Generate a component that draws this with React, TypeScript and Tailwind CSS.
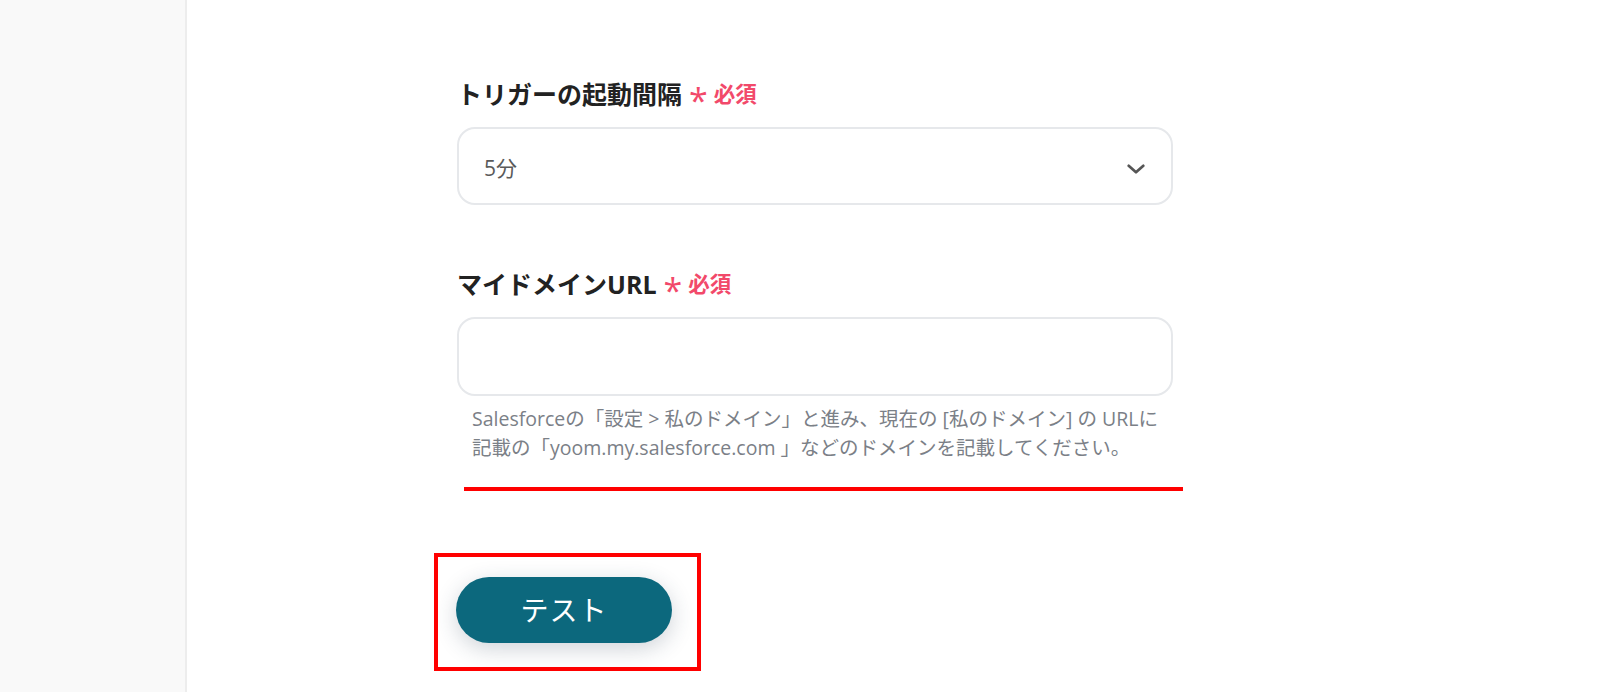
import React from "react";

const font = { fontFamily: '"Open Sans", "Noto Sans CJK JP", sans-serif' };

function Required() {
  return (
    <span className="flex items-center ml-[7px] text-[#f2496a]">
      <span className="text-[34px] font-normal leading-none mt-[12px]">*</span>
      <span className="ml-[6px] text-[21.5px] font-bold leading-none">必須</span>
    </span>
  );
}

function FieldLabel({ children }: { children: React.ReactNode }) {
  return (
    <div className="flex items-center h-[32px]">
      <span className="text-[25px] font-bold leading-[32px] text-[#222]">{children}</span>
      <Required />
    </div>
  );
}

export default function App() {
  return (
    <div className="flex h-[692px] w-full overflow-hidden bg-white" style={font}>
      <aside className="w-[187px] shrink-0 bg-[#f9f9f9] border-r-2 border-[#ededed]" />
      <main className="flex-1 pl-[270px]">
        <div className="w-[716px] pt-[78px]">
          <FieldLabel>トリガーの起動間隔</FieldLabel>
          <div className="mt-[17px] h-[78px] rounded-[18px] border-2 border-[#e6e8eb] flex items-center justify-between pl-[25px] pr-[24px] pt-[6px]">
            <span className="text-[21px] text-[#5a5a5a]">5分</span>
            <svg width="22" height="22" viewBox="0 0 24 24" fill="none" stroke="#555" strokeWidth="3" strokeLinecap="round" strokeLinejoin="round">
              <polyline points="4 8.5 12 15.5 20 8.5" />
            </svg>
          </div>

          <div className="mt-[63px]">
            <FieldLabel>マイドメインURL</FieldLabel>
          </div>
          <div className="mt-[17px] h-[79px] rounded-[18px] border-2 border-[#e6e8eb]" />

          <p className="mt-[8px] pl-[15px] text-[19.5px] leading-[29px] text-[#7b8087] whitespace-nowrap">
            Salesforceの「設定 &gt; 私のドメイン」と進み、現在の [私のドメイン] の URLに
            <br />
            記載の「yoom.my.salesforce.com 」などのドメインを記載してください。
          </p>

          <div className="mt-[25px] ml-[7px] w-[719px] h-[4px] bg-[#ff0000]" />

          <div className="mt-[62px] -ml-[23px] w-fit border-4 border-[#ff0000] pl-[18px] pt-[20px] pr-[25px] pb-[24px]">
            <button className="w-[216px] h-[66px] rounded-full bg-[#0c687d] text-white text-[28px] tracking-[1px] shadow-[0_6px_22px_rgba(40,60,80,0.22)]">
              テスト
            </button>
          </div>
        </div>
      </main>
    </div>
  );
}
